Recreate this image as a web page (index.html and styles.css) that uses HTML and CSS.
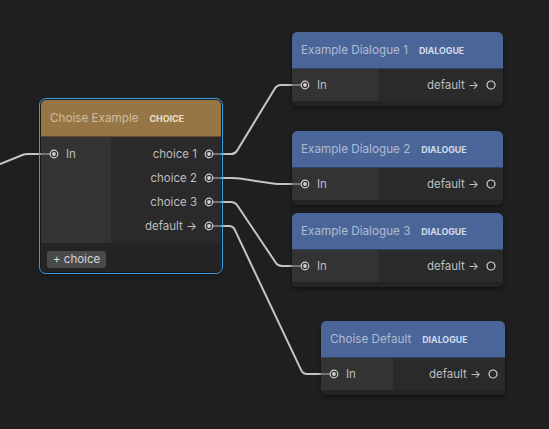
FILE: index.html
```html
<!DOCTYPE html>
<html>
<head>
<meta charset="utf-8">
<link rel="stylesheet" href="styles.css">
</head>
<body>
<div class="canvas">
  <svg class="wires" width="549" height="429" viewBox="0 0 549 429">
    <path d="M0 164 L23 154.8 Q25 154 27 154 H42"/>
    <path d="M220 154 H231 Q235 154 237.1 150.6 L274.9 88.4 Q277 85 281 85 H293"/>
    <path d="M220 178 H232 Q236 178 240 178.6 L273 183.4 Q277 184 281 184 H293"/>
    <path d="M220 202 H231 Q235 202 237.2 205.3 L275.8 262.7 Q278 266 282 266 H293"/>
    <path d="M220 226 H229 Q233 226 234.7 229.6 L301.3 370.4 Q303 374 307 374 H322"/>
  </svg>

  <div class="node n-choice selected">
    <div class="node-header head-choice"><span class="title">Choise Example</span><span class="kind">CHOICE</span></div>
    <div class="node-body">
      <div class="col col-in cw-choice">
        <div class="row row-sm">
          <svg class="port-in" width="18" height="10" viewBox="0 0 18 10"><line x1="0" y1="5" x2="9" y2="5"/><circle class="ring" cx="13" cy="5" r="3.8"/><circle class="dot" cx="13" cy="5" r="1.9"/></svg>
          <span>In</span>
        </div>
      </div>
      <div class="col col-out">
        <div class="row row-sm row-out">
          <span>choice 1</span>
          <svg class="port-out" width="16" height="10" viewBox="0 0 16 10"><line x1="8" y1="5" x2="16" y2="5"/><circle class="ring" cx="4" cy="5" r="3.8"/><circle class="dot" cx="4" cy="5" r="1.9"/></svg>
        </div>
        <div class="row row-sm row-out">
          <span>choice 2</span>
          <svg class="port-out" width="16" height="10" viewBox="0 0 16 10"><line x1="8" y1="5" x2="16" y2="5"/><circle class="ring" cx="4" cy="5" r="3.8"/><circle class="dot" cx="4" cy="5" r="1.9"/></svg>
        </div>
        <div class="row row-sm row-out">
          <span>choice 3</span>
          <svg class="port-out" width="16" height="10" viewBox="0 0 16 10"><line x1="8" y1="5" x2="16" y2="5"/><circle class="ring" cx="4" cy="5" r="3.8"/><circle class="dot" cx="4" cy="5" r="1.9"/></svg>
        </div>
        <div class="row row-sm row-out">
          <span>default →</span>
          <svg class="port-out" width="16" height="10" viewBox="0 0 16 10"><line x1="8" y1="5" x2="16" y2="5"/><circle class="ring" cx="4" cy="5" r="3.8"/><circle class="dot" cx="4" cy="5" r="1.9"/></svg>
        </div>
      </div>
    </div>
    <div class="node-footer footer-choice"><button class="add-btn">+ choice</button></div>
  </div>

  <div class="node n-d1">
    <div class="node-header head-dialogue"><span class="title">Example Dialogue 1</span><span class="kind">DIALOGUE</span></div>
    <div class="node-body">
      <div class="col col-in cw-dialogue">
        <div class="row">
          <svg class="port-in" width="18" height="10" viewBox="0 0 18 10"><line x1="0" y1="5" x2="9" y2="5"/><circle class="ring" cx="13" cy="5" r="3.8"/><circle class="dot" cx="13" cy="5" r="1.9"/></svg>
          <span>In</span>
        </div>
      </div>
      <div class="col col-out">
        <div class="row row-out">
          <span>default →</span>
          <svg class="port-out" width="16" height="12" viewBox="0 0 16 12"><circle class="ring" cx="4" cy="6" r="4"/></svg>
        </div>
      </div>
    </div>
    <div class="node-footer"></div>
  </div>

  <div class="node n-d2">
    <div class="node-header head-dialogue"><span class="title">Example Dialogue 2</span><span class="kind">DIALOGUE</span></div>
    <div class="node-body">
      <div class="col col-in cw-dialogue">
        <div class="row">
          <svg class="port-in" width="18" height="10" viewBox="0 0 18 10"><line x1="0" y1="5" x2="9" y2="5"/><circle class="ring" cx="13" cy="5" r="3.8"/><circle class="dot" cx="13" cy="5" r="1.9"/></svg>
          <span>In</span>
        </div>
      </div>
      <div class="col col-out">
        <div class="row row-out">
          <span>default →</span>
          <svg class="port-out" width="16" height="12" viewBox="0 0 16 12"><circle class="ring" cx="4" cy="6" r="4"/></svg>
        </div>
      </div>
    </div>
    <div class="node-footer"></div>
  </div>

  <div class="node n-d3">
    <div class="node-header head-dialogue"><span class="title">Example Dialogue 3</span><span class="kind">DIALOGUE</span></div>
    <div class="node-body">
      <div class="col col-in cw-dialogue">
        <div class="row">
          <svg class="port-in" width="18" height="10" viewBox="0 0 18 10"><line x1="0" y1="5" x2="9" y2="5"/><circle class="ring" cx="13" cy="5" r="3.8"/><circle class="dot" cx="13" cy="5" r="1.9"/></svg>
          <span>In</span>
        </div>
      </div>
      <div class="col col-out">
        <div class="row row-out">
          <span>default →</span>
          <svg class="port-out" width="16" height="12" viewBox="0 0 16 12"><circle class="ring" cx="4" cy="6" r="4"/></svg>
        </div>
      </div>
    </div>
    <div class="node-footer"></div>
  </div>

  <div class="node n-def">
    <div class="node-header head-dialogue"><span class="title">Choise Default</span><span class="kind">DIALOGUE</span></div>
    <div class="node-body">
      <div class="col col-in cw-default">
        <div class="row">
          <svg class="port-in" width="18" height="10" viewBox="0 0 18 10"><line x1="0" y1="5" x2="9" y2="5"/><circle class="ring" cx="13" cy="5" r="3.8"/><circle class="dot" cx="13" cy="5" r="1.9"/></svg>
          <span>In</span>
        </div>
      </div>
      <div class="col col-out">
        <div class="row row-out">
          <span>default →</span>
          <svg class="port-out" width="16" height="12" viewBox="0 0 16 12"><circle class="ring" cx="4" cy="6" r="4"/></svg>
        </div>
      </div>
    </div>
    <div class="node-footer"></div>
  </div>
</div>
</body>
</html>
```

FILE: styles.css
```css
html, body {
  margin: 0;
  padding: 0;
  background: #1f1f1f;
}
.canvas {
  position: relative;
  width: 549px;
  height: 429px;
  overflow: hidden;
  background: #1f1f1f;
  font-family: Inter, "Noto Sans", sans-serif;
}
.wires {
  position: absolute;
  left: 0;
  top: 0;
}
.wires path {
  fill: none;
  stroke: #c4c4c4;
  stroke-width: 2;
  stroke-linecap: round;
  stroke-linejoin: round;
}
.node {
  position: absolute;
  display: flex;
  flex-direction: column;
  border-radius: 5px;
  overflow: hidden;
  background: #242424;
  box-shadow: 0 2px 4px rgba(0, 0, 0, 0.45);
}
.selected {
  overflow: visible;
  outline: 1px solid #3a9ee4;
  outline-offset: 1px;
}
.n-choice { left: 41px; top: 100px; width: 180px; }
.n-d1 { left: 292px; top: 32px; width: 211px; }
.n-d2 { left: 292px; top: 131px; width: 211px; }
.n-d3 { left: 292px; top: 213px; width: 211px; }
.n-def { left: 321px; top: 321px; width: 184px; }

.node-header {
  height: 36px;
  display: flex;
  align-items: center;
  gap: 11px;
  padding-left: 9px;
  border-bottom: 1px solid rgba(0, 0, 0, 0.35);
  border-radius: 5px 5px 0 0;
}
.head-choice { background: #977646; }
.head-dialogue { background: #4a6699; }
.title {
  font-size: 11.7px;
}
.head-choice .title { color: #cdbd9e; }
.head-dialogue .title { color: #aebbd2; }
.kind {
  font-size: 8.8px;
  font-weight: 700;
}
.head-choice .kind { color: #ece0c8; }
.head-dialogue .kind { color: #d3dcec; }

.node-body {
  display: flex;
}
.col {
  display: flex;
  flex-direction: column;
}
.col-in { background: #333333; }
.col-out {
  flex: 1;
  background: #2a2a2a;
}
.n-choice .col { padding: 5px 0 5px; }
.cw-choice { width: 70px; }
.cw-dialogue { width: 86px; }
.cw-default { width: 72px; }

.row {
  height: 32px;
  display: flex;
  align-items: center;
  gap: 7px;
  font-size: 11.5px;
  color: #bdbdbd;
}
.row-sm { height: 24px; }
.row-out {
  justify-content: flex-end;
  gap: 8px;
}
.port-in, .port-out {
  flex-shrink: 0;
  overflow: visible;
}
.port-in line, .port-out line {
  stroke: #8c8c8c;
  stroke-width: 1.5;
}
.ring {
  fill: none;
  stroke: #cfcfcf;
  stroke-width: 1.2;
}
.dot { fill: #cfcfcf; }

.node-footer {
  height: 5px;
  background: #242424;
}
.footer-choice {
  height: auto;
  padding: 8px 6px 4px;
  border-radius: 0 0 5px 5px;
}
.add-btn {
  display: block;
  height: 17px;
  padding: 0 6px;
  border: none;
  border-radius: 3px;
  background: #4a4a4a;
  color: #d6d6d6;
  font-family: Inter, "Noto Sans", sans-serif;
  font-size: 11.5px;
  line-height: 17px;
}
```
